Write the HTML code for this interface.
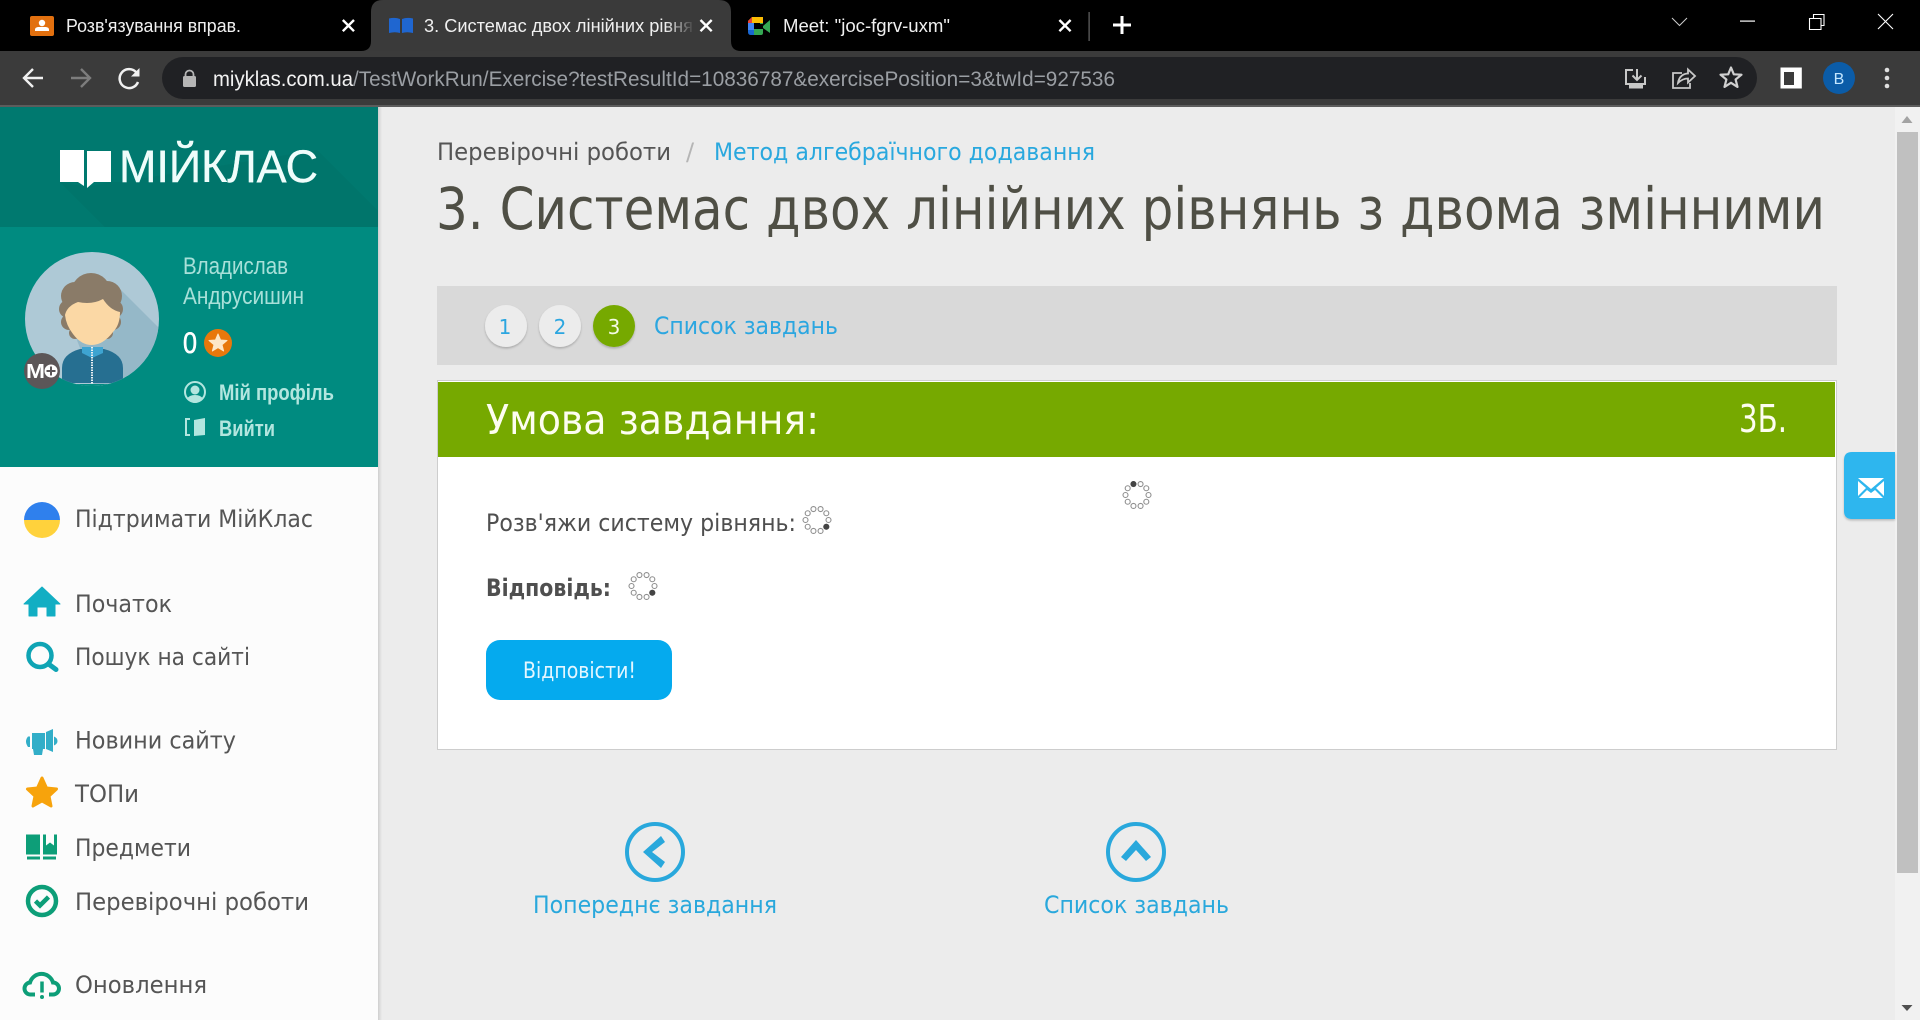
<!DOCTYPE html>
<html lang="uk">
<head>
<meta charset="utf-8">
<title>3. Системас двох лінійних рівнянь з двома змінними</title>
<style>
html,body{margin:0;padding:0;width:1920px;height:1020px;overflow:hidden;background:#ececec}
svg{display:block}
.c{font-family:"Liberation Sans",sans-serif}
.o{font-family:"DejaVu Sans",sans-serif}
</style>
</head>
<body>
<svg xmlns="http://www.w3.org/2000/svg" width="1920" height="1020" viewBox="0 0 1920 1020">
<defs>
<linearGradient id="fade" x1="0" x2="1" y1="0" y2="0"><stop offset="0" stop-color="#3a3a3a" stop-opacity="0"/><stop offset="1" stop-color="#3a3a3a"/></linearGradient>
<linearGradient id="shade" x1="0" x2="1" y1="0" y2="0"><stop offset="0" stop-color="#cfcfcf"/><stop offset="1" stop-color="#ececec"/></linearGradient>
<clipPath id="av"><circle cx="92" cy="319" r="67"/></clipPath>
<clipPath id="flag"><ellipse cx="42" cy="520" rx="18" ry="18"/></clipPath>
<g id="ring" fill="none" stroke="#8f8f8f" stroke-width="1.1">
<circle cx="11.5" cy="0" r="2.5"/><circle cx="9.3" cy="6.76" r="2.5"/><circle cx="3.55" cy="10.94" r="2.5"/><circle cx="-3.55" cy="10.94" r="2.5"/><circle cx="-9.3" cy="6.76" r="2.5"/><circle cx="-11.5" cy="0" r="2.5"/><circle cx="-9.3" cy="-6.76" r="2.5"/><circle cx="-3.55" cy="-10.94" r="2.5"/><circle cx="3.55" cy="-10.94" r="2.5"/><circle cx="9.3" cy="-6.76" r="2.5"/>
</g>
<filter id="sh" x="-20%" y="-20%" width="140%" height="140%"><feDropShadow dx="0" dy="1.5" stdDeviation="1" flood-color="#000" flood-opacity=".22"/></filter>
</defs>

<!-- browser chrome -->
<rect width="1920" height="51" fill="#000"/>
<rect y="51" width="1920" height="54" fill="#3b3b3b"/>
<rect y="105" width="1920" height="2" fill="#5c5c5c"/>
<path d="M361 51Q371 51 371 41V12Q371 0 383 0H719Q731 0 731 12V41Q731 51 741 51Z" fill="#3a3a3a"/>

<!-- tab 1 -->
<rect x="30" y="16" width="24" height="20" rx="2" fill="#e2700f"/>
<circle cx="42" cy="23" r="3.2" fill="#fff"/>
<path d="M35 31V29.5Q35 27.5 38 27H46Q49 27.5 49 29.5V31Z" fill="#fff"/>
<text class="c" x="66" y="32" font-size="18" fill="#f0f0f0" textLength="175" lengthAdjust="spacingAndGlyphs">Розв'язування вправ.</text>
<path d="M342.8 20L354 31.2M354 20L342.8 31.2" stroke="#fff" stroke-width="2.4"/>

<!-- tab 2 -->
<path d="M389 18.5Q395 17 400 19V33Q395 31.5 389 33ZM402 19Q407 17 413 18.5V33Q407 31.5 402 33Z" fill="#1f66d0"/>
<text class="c" x="424" y="32" font-size="18" fill="#f0f0f0" textLength="269" lengthAdjust="spacingAndGlyphs">3. Системас двох лінійних рівня</text>
<rect x="665" y="12" width="30" height="26" fill="url(#fade)"/>
<path d="M700.5 20L711.7 31.2M711.7 20L700.5 31.2" stroke="#fff" stroke-width="2.4"/>

<!-- tab 3 -->
<path d="M752 17H763V23H754V26H748V21Z" fill="#fbbc04"/>
<path d="M748 21L752 17V23H748Z" fill="#ea4335"/>
<path d="M748 23H754V30H748Z" fill="#4285f4"/>
<path d="M748 30H754V35H751Q748 35 748 32Z" fill="#1967d2"/>
<path d="M754 29H763V33Q763 35 761 35H754Z" fill="#34a853"/>
<path d="M763 26L770 20V33L763 28ZM763 17V24L760 24V23H763Z" fill="#34a853"/>
<text class="c" x="783" y="32" font-size="18" fill="#f0f0f0" textLength="167" lengthAdjust="spacingAndGlyphs">Meet: "joc-fgrv-uxm"</text>
<path d="M1059.4 20L1070.6 31.2M1070.6 20L1059.4 31.2" stroke="#fff" stroke-width="2.4"/>
<rect x="1088.5" y="12" width="1.2" height="29" fill="#666"/>
<path d="M1122 16V34M1113 25H1131" stroke="#fff" stroke-width="3"/>

<!-- window controls -->
<path d="M1672 18L1679.5 25.5L1687 18" fill="none" stroke="#ccc" stroke-width="1"/>
<rect x="1740" y="20.5" width="15" height="1.2" fill="#fff"/>
<path d="M1809.5 18.5H1821V29.5H1809.5ZM1813.5 18V14.5H1824V25.5H1821" fill="none" stroke="#fff" stroke-width="1.1"/>
<path d="M1878 14L1893 29M1893 14L1878 29" stroke="#fff" stroke-width="1.1"/>

<!-- toolbar -->
<path d="M43 78H25M33 69L24 78L33 87" fill="none" stroke="#f0f0f0" stroke-width="2.4"/>
<path d="M71 78H89M81 69L90 78L81 87" fill="none" stroke="#7d7d7d" stroke-width="2.4"/>
<path d="M136 72A9.5 9.5 0 1 0 138 82" fill="none" stroke="#f0f0f0" stroke-width="2.5"/>
<path d="M139.5 68V76.5H131Z" fill="#f0f0f0"/>
<rect x="162" y="57" width="1595" height="42" rx="21" fill="#202124"/>
<rect x="183" y="76" width="13" height="11" rx="1.5" fill="#b5b5b5"/>
<path d="M185.5 76V74.5A4 4 0 0 1 193.5 74.5V76" fill="none" stroke="#b5b5b5" stroke-width="1.8"/>
<text class="c" x="213" y="86" font-size="21" fill="#f2f2f2" textLength="140" lengthAdjust="spacingAndGlyphs">miyklas.com.ua</text>
<text class="c" x="353" y="86" font-size="21" fill="#9a9ea3" textLength="762" lengthAdjust="spacingAndGlyphs">/TestWorkRun/Exercise?testResultId=10836787&amp;exercisePosition=3&amp;twId=927536</text>

<path d="M1633 70H1626V84H1645V77" fill="none" stroke="#c8c8c8" stroke-width="2"/>
<path d="M1637 69V79M1632.5 75.5L1637 80L1641.5 75.5" fill="none" stroke="#c8c8c8" stroke-width="2"/>
<rect x="1629" y="85" width="14" height="3.5" fill="#c8c8c8"/>
<path d="M1682 73H1673V88H1690V83" fill="none" stroke="#c8c8c8" stroke-width="1.8"/>
<path d="M1678 83C1679 76 1684 73.500 1688 73.500V69.500L1695 76L1688 82.500V78.500C1684 78.500 1681 80 1678 83Z" fill="none" stroke="#c8c8c8" stroke-width="1.8"/>
<polygon points="1731,67.500 1733.800,74.300 1741.500,74.700 1735.600,79.500 1737.500,86.900 1731,82.800 1724.500,86.900 1726.400,79.500 1720.500,74.700 1728.200,74.300" fill="none" stroke="#d0d0d0" stroke-width="2.200" stroke-linejoin="round"/>
<rect x="1780.500" y="67.500" width="21.300" height="21" fill="#fff"/>
<rect x="1784" y="72" width="10" height="13" fill="#3b3b3b"/>
<circle cx="1839" cy="78" r="16" fill="#0b5ca8"/>
<text class="c" x="1839" y="84" font-size="16" fill="#c3e6ff" text-anchor="middle">В</text>
<circle cx="1887" cy="70" r="2.300" fill="#e0e0e0"/><circle cx="1887" cy="78" r="2.300" fill="#e0e0e0"/><circle cx="1887" cy="86" r="2.300" fill="#e0e0e0"/>

<!-- page background -->
<rect x="378" y="107" width="1517" height="913" fill="#ececec"/>
<rect x="378" y="107" width="4" height="913" fill="url(#shade)"/>

<!-- sidebar top -->
<rect y="107" width="378" height="120" fill="#00796f"/>
<polygon points="60,182 105,227 378,227 378,211 317,150 120,182 111,182 87,187" fill="#00756b"/>
<rect y="227" width="378" height="240" fill="#008b80"/>
<rect y="467" width="378" height="553" fill="#fcfcfc"/>
<path d="M60 150H84V186L78 182H60Z" fill="#fff"/>
<path d="M87 151H111V182H94L87 188Z" fill="#fff"/>
<text class="c" x="119" y="182" font-size="45" fill="#effdfb" stroke="#effdfb" stroke-width=".4" textLength="199" lengthAdjust="spacingAndGlyphs">МІЙКЛАС</text>

<!-- avatar -->
<circle cx="92" cy="319" r="67" fill="#aec9d6"/>
<g clip-path="url(#av)">
<polygon points="118,287 175,344 175,400 100,400 75,335" fill="#95b8c8"/>
<rect x="0" y="384" width="200" height="10" fill="#008b80"/>
<path d="M62 383V368Q62 354 80 349H104Q123 354 123 368V383Z" fill="#266f91"/>
<path d="M82 347H103V353L92 358L82 353Z" fill="#3ea4d1"/>
</g>
<g fill="#8a7b68">
<circle cx="91" cy="293" r="20"/><circle cx="75" cy="296" r="14"/><circle cx="107" cy="296" r="15"/><circle cx="68" cy="309" r="9"/><circle cx="114" cy="309" r="9"/><circle cx="69" cy="322" r="8"/><circle cx="113" cy="322" r="8"/><circle cx="75" cy="333" r="6"/><circle cx="107" cy="333" r="6"/>
</g>
<path d="M65 315Q67 306 78 302Q92 305 103 299Q110 310 120 312Q120 325 113 332Q103 345 92 345Q81 345 73 334Q66 325 65 315Z" fill="#fbd8a5"/>
<path d="M92 347V384" stroke="#e8eef1" stroke-width="2" stroke-dasharray="1.500 1"/>
<circle cx="42" cy="371" r="18" fill="#5c5658"/>
<text class="c" x="26" y="378" font-size="20" font-weight="700" fill="#fff" textLength="19" lengthAdjust="spacingAndGlyphs">M</text>
<circle cx="51" cy="371" r="6.500" fill="#fff"/>
<path d="M46.500 371H55.500M51 366.500V375.500" stroke="#5c5658" stroke-width="2"/>

<text class="c" x="183" y="274" font-size="24" fill="#a8e0d9" textLength="105" lengthAdjust="spacingAndGlyphs">Владислав</text>
<text class="c" x="183" y="304" font-size="24" fill="#a8e0d9" textLength="121" lengthAdjust="spacingAndGlyphs">Андрусишин</text>
<text class="c" x="183" y="353" font-size="30" fill="#fff" stroke="#fff" stroke-width=".6" textLength="14" lengthAdjust="spacingAndGlyphs">0</text>
<circle cx="218" cy="343" r="14" fill="#e8780c"/>
<polygon points="218,334 220.500,340 227,340.500 222,344.700 223.600,351 218,347.600 212.400,351 214,344.700 209,340.500 215.500,340" fill="#fde7c8" stroke="#fde7c8" stroke-width="1" stroke-linejoin="round"/>

<circle cx="195" cy="392" r="10" fill="none" stroke="#b3e6df" stroke-width="2"/>
<circle cx="195" cy="390" r="4.500" fill="#b3e6df"/>
<path d="M187 399Q189 395 195 395Q201 395 203 399Q199 403 195 403Q191 403 187 399Z" fill="#b3e6df"/>
<text class="c" x="219" y="400" font-size="22" font-weight="700" fill="#b3e6df" textLength="115" lengthAdjust="spacingAndGlyphs">Мій профіль</text>
<path d="M190 419H186V435H190" fill="none" stroke="#b3e6df" stroke-width="2"/>
<path d="M194 420L205 418V435L194 436Z" fill="#b3e6df"/>
<text class="c" x="219" y="436" font-size="22" font-weight="700" fill="#b3e6df" textLength="56" lengthAdjust="spacingAndGlyphs">Вийти</text>

<!-- sidebar menu -->
<g clip-path="url(#flag)"><rect x="24" y="502" width="36" height="18" fill="#2f80ed"/><rect x="24" y="520" width="36" height="18" fill="#ffd23c"/></g>
<text class="o" x="75" y="527" font-size="24" fill="#555" textLength="238" lengthAdjust="spacingAndGlyphs">Підтримати МійКлас</text>

<path d="M24 604L42 587L60 604H55V616H47V607H37V616H29V604Z" fill="#12aec3" stroke="#12aec3" stroke-width="1" stroke-linejoin="round"/>
<text class="o" x="75" y="612" font-size="24" fill="#555" textLength="97" lengthAdjust="spacingAndGlyphs">Початок</text>

<circle cx="40" cy="655.500" r="11.500" fill="none" stroke="#0fa4b4" stroke-width="4.500"/>
<path d="M48.500 664L56 669.500" stroke="#0fa4b4" stroke-width="5" stroke-linecap="round"/>
<text class="o" x="75" y="665" font-size="24" fill="#555" textLength="175" lengthAdjust="spacingAndGlyphs">Пошук на сайті</text>

<path d="M30 736.500V747H28Q26 744 26 741.500Q26 739 28 736.500ZM32 733H45V749H43L42 755H34L33 749H32ZM46 732L53 729V752L46 749ZM54 736.500Q57.500 738 57.500 741Q57.500 744 54 745.500Z" fill="#32aec8"/>
<text class="o" x="75" y="748.500" font-size="24" fill="#555" textLength="161" lengthAdjust="spacingAndGlyphs">Новини сайту</text>

<g transform="translate(0,10)"><polygon points="42,768 46.500,778 56.500,779 49,786 51,796 42,791 33,796 35,786 27.500,779 37.500,778" fill="#f7a30c" stroke="#f7a30c" stroke-width="3" stroke-linejoin="round"/></g>
<text class="o" x="75" y="802" font-size="24" fill="#555" textLength="64" lengthAdjust="spacingAndGlyphs">ТОПи</text>

<g transform="translate(0,11.500)"><path d="M26 823H40V843H26ZM43 823H46V834L50 831L54 834V823H57V843H43Z" fill="#0d9e78"/>
<path d="M27 845H40V848H27ZM43 845H56V848H43Z" fill="#0d9e78"/></g>
<text class="o" x="75" y="856" font-size="24" fill="#555" textLength="116" lengthAdjust="spacingAndGlyphs">Предмети</text>

<g transform="translate(0,14)"><circle cx="42" cy="887" r="14" fill="none" stroke="#0d9e78" stroke-width="4.500"/>
<path d="M35.500 887L40 891.500L48.500 883" fill="none" stroke="#0d9e78" stroke-width="4.500"/></g>
<text class="o" x="75" y="910" font-size="24" fill="#555" textLength="234" lengthAdjust="spacingAndGlyphs">Перевірочні роботи</text>

<g transform="translate(0,15.500)"><path d="M35 979H31A6 6 0 0 1 30 967A12 12 0 0 1 53 967A6 6 0 0 1 53 979H49" fill="none" stroke="#0d9e78" stroke-width="4"/>
<path d="M42 966V977" stroke="#0d9e78" stroke-width="3.500"/><circle cx="42" cy="981.500" r="2" fill="#0d9e78"/></g>
<text class="o" x="75" y="993" font-size="24" fill="#555" textLength="132" lengthAdjust="spacingAndGlyphs">Оновлення</text>

<!-- breadcrumb + title -->
<text class="o" x="437" y="160" font-size="24" fill="#555" textLength="234" lengthAdjust="spacingAndGlyphs">Перевірочні роботи</text>
<text class="o" x="686" y="160" font-size="24" fill="#b5b5b5">/</text>
<text class="o" x="714" y="160" font-size="24" fill="#29a8de" textLength="381" lengthAdjust="spacingAndGlyphs">Метод алгебраїчного додавання</text>
<text class="o" x="436" y="229" font-size="58" fill="#4f4f45" textLength="1389" lengthAdjust="spacingAndGlyphs">3. Системас двох лінійних рівнянь з двома змінними</text>

<!-- pager -->
<rect x="437" y="286" width="1400" height="79" fill="#d9d9d9"/>
<circle cx="506" cy="326" r="21" fill="#ececec" filter="url(#sh)"/>
<circle cx="560" cy="326" r="21" fill="#ececec" filter="url(#sh)"/>
<circle cx="614" cy="326" r="21" fill="#76a900" filter="url(#sh)"/>
<text class="o" x="505" y="334" font-size="20" fill="#2ba6e0" text-anchor="middle">1</text>
<text class="o" x="560" y="334" font-size="20" fill="#2ba6e0" text-anchor="middle">2</text>
<text class="o" x="614" y="334" font-size="20" fill="#f4fbe6" text-anchor="middle">3</text>
<text class="o" x="654" y="334" font-size="24" fill="#2ba6e0" textLength="184" lengthAdjust="spacingAndGlyphs">Список завдань</text>

<!-- card -->
<rect x="437.500" y="380.500" width="1399" height="369" fill="#fff" stroke="#cdcdcd"/>
<rect x="438" y="382" width="1397" height="75" fill="#76a900"/>
<text class="o" x="486" y="434" font-size="41" fill="#fdfdf0" textLength="333" lengthAdjust="spacingAndGlyphs">Умова завдання:</text>
<text class="o" x="1739" y="432" font-size="38" fill="#fdfdf0" textLength="48" lengthAdjust="spacingAndGlyphs">3Б.</text>

<use href="#ring" x="1137" y="495"/><circle cx="1133.450" cy="484.060" r="3" fill="#444"/>
<text class="o" x="486" y="531" font-size="24" fill="#4f4f4f" textLength="310" lengthAdjust="spacingAndGlyphs">Розв'яжи систему рівнянь:</text>
<use href="#ring" x="817" y="520"/><circle cx="826.300" cy="526.760" r="3" fill="#444"/>
<text class="o" x="486" y="596" font-size="24" font-weight="700" fill="#4f4f4f" textLength="125" lengthAdjust="spacingAndGlyphs">Відповідь:</text>
<use href="#ring" x="643" y="586"/><circle cx="652.300" cy="592.760" r="3" fill="#444"/>
<rect x="486" y="640" width="186" height="60" rx="14" fill="#05aaee"/>
<text class="o" x="523" y="678" font-size="22" fill="#e4f6ff" textLength="113" lengthAdjust="spacingAndGlyphs">Відповісти!</text>

<!-- bottom nav -->
<circle cx="655" cy="852" r="28" fill="none" stroke="#29a8dc" stroke-width="4"/>
<polygon points="661,836 665,842 652,852 665,862 661,868 643,852" fill="#29a8dc"/>
<circle cx="1136" cy="852" r="28" fill="none" stroke="#29a8dc" stroke-width="4"/>
<polygon points="1136,840 1151,857 1146,861 1136,850 1126,861 1121,857" fill="#29a8dc"/>
<text class="o" x="533" y="913" font-size="24" fill="#29a8dc" textLength="244" lengthAdjust="spacingAndGlyphs">Попереднє завдання</text>
<text class="o" x="1044" y="913" font-size="24" fill="#29a8dc" textLength="185" lengthAdjust="spacingAndGlyphs">Список завдань</text>

<!-- scrollbar -->
<rect x="1895" y="107" width="25" height="913" fill="#f1f1f1"/>
<rect x="1897" y="132" width="21" height="741" fill="#c0c0c0"/>
<polygon points="1901.500,123 1912.500,123 1907,116" fill="#a3a3a3"/>
<polygon points="1901.500,1005 1912.500,1005 1907,1011" fill="#505050"/>

<!-- floating mail -->
<path d="M1895 452H1852Q1844 452 1844 460V511Q1844 519 1852 519H1895Z" fill="#2fb6ee" filter="url(#sh)"/>
<path d="M1858 478H1884L1871 489ZM1858 481L1866 488L1858 496ZM1884 481L1876 488L1884 496ZM1859 498L1867 490L1871 493L1875 490L1883 498Z" fill="#fff"/>
</svg>
</body>
</html>
